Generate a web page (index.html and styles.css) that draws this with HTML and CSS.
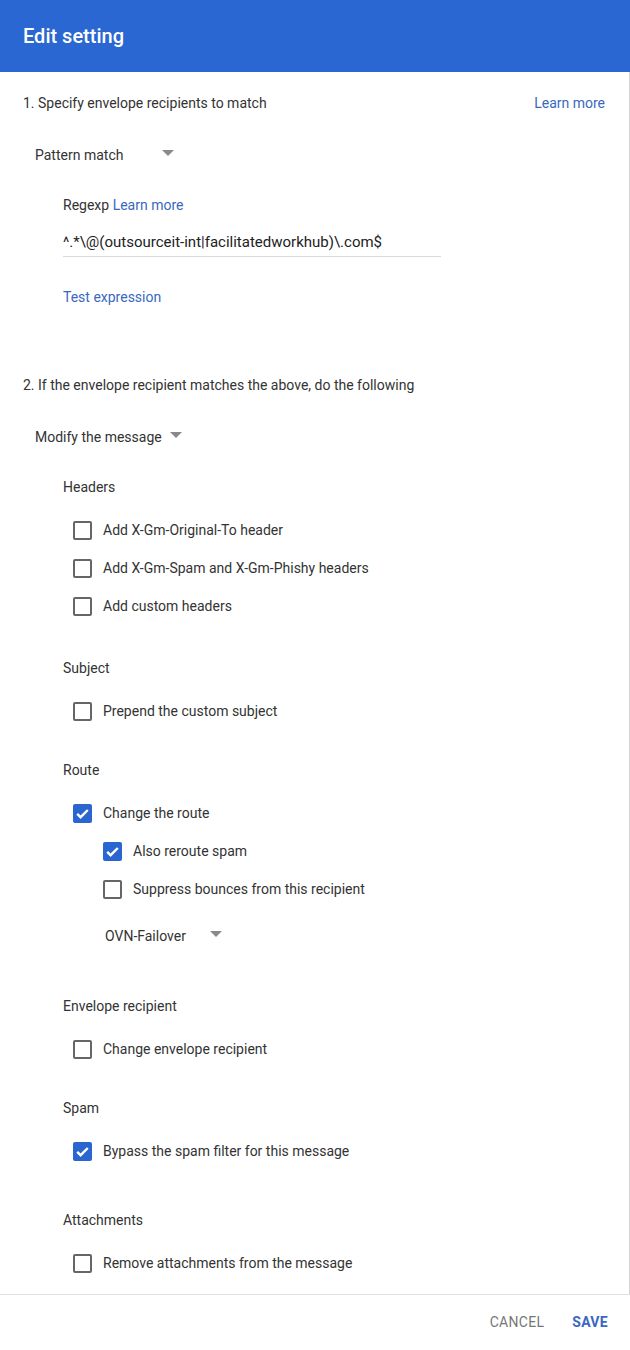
FILE: index.html
```html
<!DOCTYPE html>
<html>
<head>
<meta charset="utf-8">
<link rel="stylesheet" href="styles.css">
</head>
<body>
<div class="dialog">
  <header class="header"><h1 class="title">Edit setting</h1></header>
  <main class="body">
    <div class="step-row step-1">
      <span class="step-text">1. Specify envelope recipients to match</span>
      <a class="link">Learn more</a>
    </div>
    <div class="select select-pattern"><span>Pattern match</span><span class="arrow arrow-pattern"></span></div>
    <div class="indent">
      <div class="label regexp-label">Regexp <a class="link">Learn more</a></div>
      <div class="input">^.*\@(outsourceit-int|facilitatedworkhub)\.com$</div>
      <a class="link test-link">Test expression</a>
    </div>
    <div class="step-row step-2">
      <span class="step-text">2. If the envelope recipient matches the above, do the following</span>
    </div>
    <div class="select select-modify"><span>Modify the message</span><span class="arrow arrow-modify"></span></div>
    <div class="indent">
      <div class="group group-first">
        <div class="label">Headers</div>
        <div class="checks">
          <label class="check"><span class="box"></span>Add X-Gm-Original-To header</label>
          <label class="check"><span class="box"></span>Add X-Gm-Spam and X-Gm-Phishy headers</label>
          <label class="check"><span class="box"></span>Add custom headers</label>
        </div>
      </div>
      <div class="group group-subject">
        <div class="label">Subject</div>
        <div class="checks">
          <label class="check"><span class="box"></span>Prepend the custom subject</label>
        </div>
      </div>
      <div class="group">
        <div class="label">Route</div>
        <div class="checks">
          <label class="check"><span class="box on"><svg viewBox="0 0 19 19" class="tick"><path d="M4.2 9.8l3.4 3.4L14.8 6" /></svg></span>Change the route</label>
          <div class="sub">
            <label class="check"><span class="box on"><svg viewBox="0 0 19 19" class="tick"><path d="M4.2 9.8l3.4 3.4L14.8 6" /></svg></span>Also reroute spam</label>
            <label class="check"><span class="box"></span>Suppress bounces from this recipient</label>
            <div class="select select-route"><span>OVN-Failover</span><span class="arrow arrow-route"></span></div>
          </div>
        </div>
      </div>
      <div class="group group-envelope">
        <div class="label">Envelope recipient</div>
        <div class="checks">
          <label class="check"><span class="box"></span>Change envelope recipient</label>
        </div>
      </div>
      <div class="group">
        <div class="label">Spam</div>
        <div class="checks">
          <label class="check"><span class="box on"><svg viewBox="0 0 19 19" class="tick"><path d="M4.2 9.8l3.4 3.4L14.8 6" /></svg></span>Bypass the spam filter for this message</label>
        </div>
      </div>
      <div class="group group-attach">
        <div class="label">Attachments</div>
        <div class="checks">
          <label class="check"><span class="box"></span>Remove attachments from the message</label>
        </div>
      </div>
    </div>
  </main>
  <footer class="footer">
    <button class="btn btn-cancel">CANCEL</button>
    <button class="btn btn-save">SAVE</button>
  </footer>
</div>
</body>
</html>
```
FILE: styles.css
```css
html, body {
  margin: 0;
  padding: 0;
  background: #fff;
}
body {
  font-family: Roboto, "Liberation Sans", Arial, sans-serif;
  color: #333;
  font-size: 14px;
}
.dialog {
  width: 630px;
  height: 1350px;
  display: flex;
  flex-direction: column;
  box-sizing: border-box;
}
.header {
  height: 72px;
  flex: none;
  background: #2a67d2;
  display: flex;
  align-items: center;
  padding-left: 23px;
}
.title {
  margin: 0;
  color: #fff;
  font-size: 20px;
  font-weight: 500;
  line-height: 28px;
}
.body {
  flex: 1;
  overflow: hidden;
  padding: 0 24px 0 23px;
  border-right: 1px solid #d4d4d4;
}
.link {
  color: #3a68c0;
  text-decoration: none;
  cursor: pointer;
}
.step-row {
  display: flex;
  justify-content: space-between;
  line-height: 20px;
}
.step-1 { margin-top: 21px; }
.step-2 { margin-top: 68px; }
.select {
  display: flex;
  align-items: center;
  line-height: 20px;
  padding-left: 12px;
}
.select-pattern { margin-top: 32px; }
.select-modify { margin-top: 32px; }
.arrow {
  width: 0;
  height: 0;
  border-left: 6px solid transparent;
  border-right: 6px solid transparent;
  border-top: 6px solid #8a8a8a;
  margin-top: -4px;
}
.arrow-pattern { margin-left: 39px; }
.arrow-modify { margin-left: 8px; }
.arrow-route { margin-left: 24px; }
.indent {
  padding-left: 40px;
}
.label {
  line-height: 20px;
}
.regexp-label { margin-top: 30px; }
.input {
  margin-top: 17px;
  width: 378px;
  font-size: 15px;
  line-height: 20px;
  color: #222;
  padding-bottom: 4px;
  border-bottom: 1px solid #dadada;
}
.test-link {
  display: block;
  margin-top: 30px;
  line-height: 20px;
}
.group { margin-top: 30px; }
.group-first { margin-top: 30px; }
.group-subject { margin-top: 33px; }
.group-envelope { margin-top: 50px; }
.group-attach { margin-top: 40px; }
.checks {
  margin-top: 14px;
  padding-left: 10px;
}
.check {
  display: flex;
  align-items: center;
  height: 38px;
  line-height: 20px;
}
.box {
  width: 15px;
  height: 15px;
  border: 2px solid #666;
  border-radius: 2px;
  margin-right: 11px;
  flex: none;
  display: flex;
  align-items: center;
  justify-content: center;
}
.box.on {
  background: #2b65cf;
  border-color: #2b65cf;
}
.tick {
  width: 19px;
  height: 19px;
  flex: none;
  fill: none;
  stroke: #fff;
  stroke-width: 2.4;
}
.sub {
  padding-left: 30px;
}
.select-route {
  padding-left: 2px;
  margin-top: 18px;
}
.footer {
  height: 55px;
  flex: none;
  border-top: 1px solid #e0e0e0;
  display: flex;
  justify-content: flex-end;
  align-items: center;
  padding-right: 14px;
  gap: 8px;
}
.btn {
  background: none;
  border: none;
  font-family: Roboto, "Liberation Sans", Arial, sans-serif;
  font-size: 14px;
  padding: 0 8px;
  height: 36px;
  letter-spacing: 0.3px;
  cursor: pointer;
  margin-top: -2px;
}
.btn-cancel {
  color: #777;
  margin-right: 4px;
}
.btn-save {
  color: #3a68c0;
  font-weight: 700;
}
```
